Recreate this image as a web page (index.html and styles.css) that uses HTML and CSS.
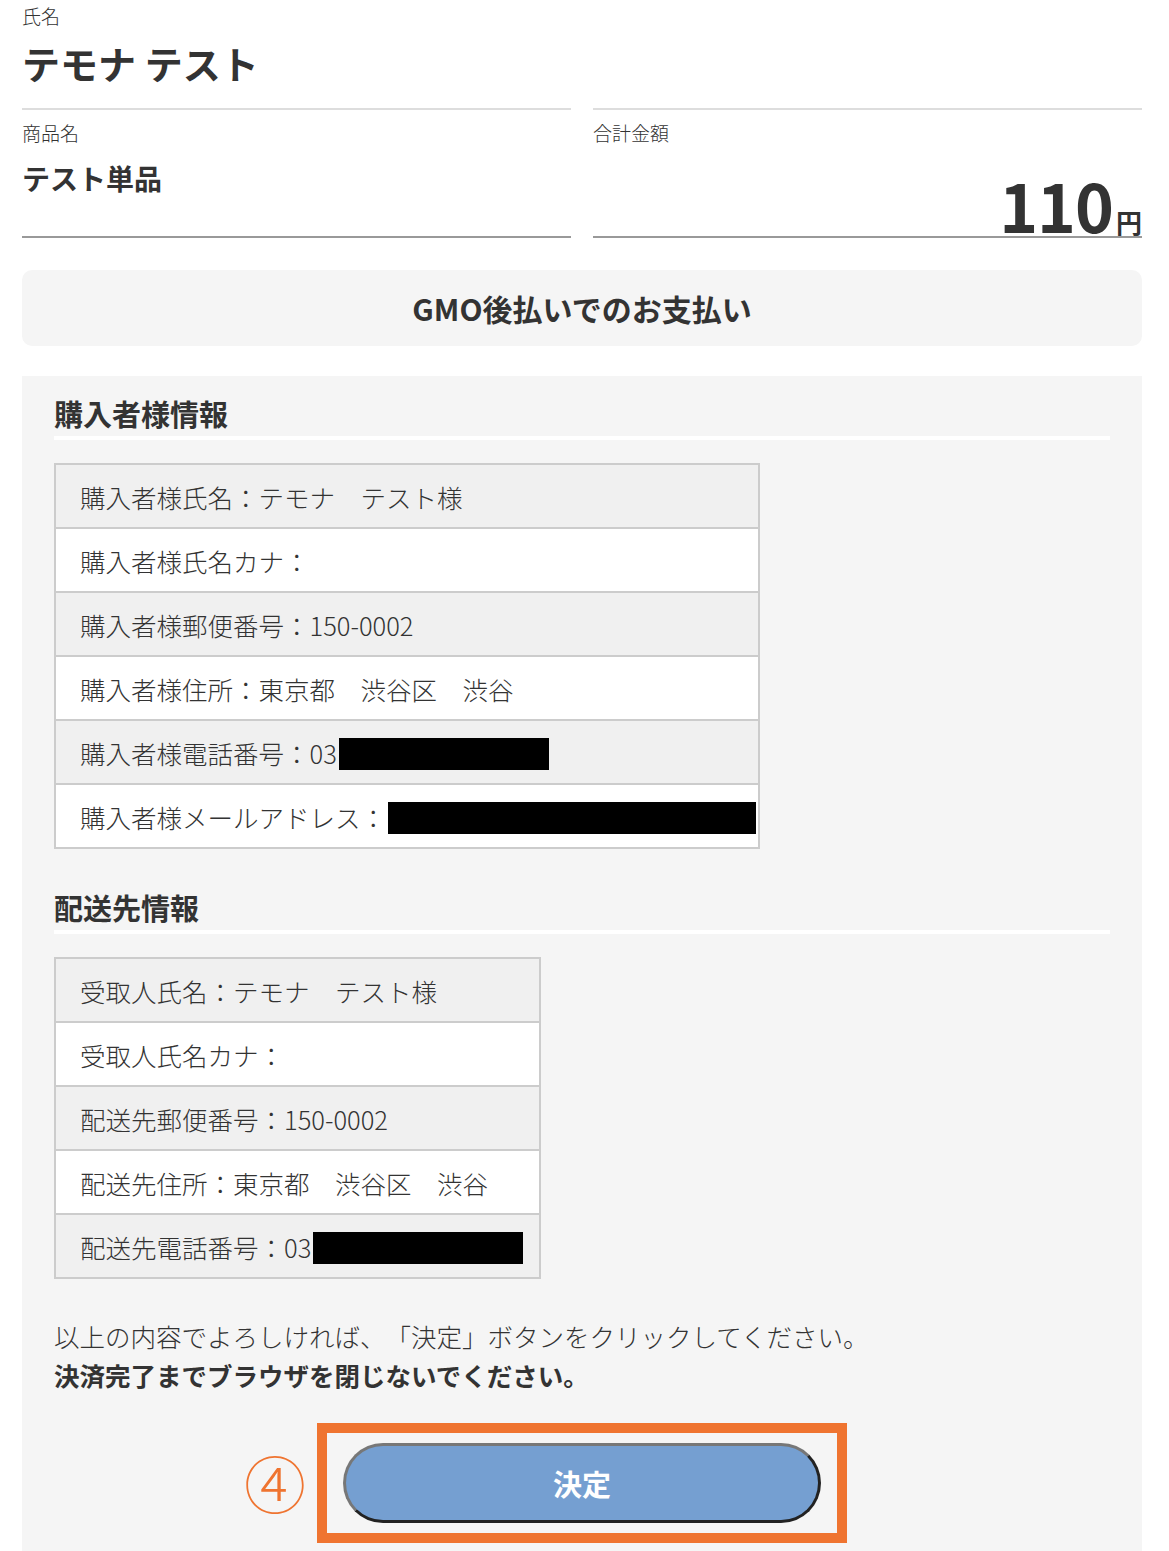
FILE: index.html
```html
<!DOCTYPE html>
<html lang="ja">
<head>
<meta charset="utf-8">
<title>GMO後払いでのお支払い</title>
<link rel="stylesheet" href="styles.css">
</head>
<body>
<div class="page">
  <div class="customer">
    <div class="label">氏名</div>
    <div class="customer-name">テモナ テスト</div>
  </div>

  <div class="summary">
    <div class="summary-col">
      <div class="label">商品名</div>
      <div class="product-name">テスト単品</div>
    </div>
    <div class="summary-col summary-total">
      <div class="label">合計金額</div>
      <div class="price">110<span class="yen">円</span></div>
    </div>
  </div>

  <div class="method">GMO後払いでのお支払い</div>

  <div class="panel">
    <h3 class="panel-heading">購入者様情報</h3>
    <div class="info-list info-buyer">
      <div class="info-row">購入者様氏名：テモナ　テスト様</div>
      <div class="info-row">購入者様氏名カナ：</div>
      <div class="info-row">購入者様郵便番号：150-0002</div>
      <div class="info-row">購入者様住所：東京都　渋谷区　渋谷</div>
      <div class="info-row">購入者様電話番号：03<span class="redact redact-phone"></span></div>
      <div class="info-row">購入者様メールアドレス：<span class="redact redact-mail"></span></div>
    </div>

    <h3 class="panel-heading panel-heading-second">配送先情報</h3>
    <div class="info-list info-ship">
      <div class="info-row">受取人氏名：テモナ　テスト様</div>
      <div class="info-row">受取人氏名カナ：</div>
      <div class="info-row">配送先郵便番号：150-0002</div>
      <div class="info-row">配送先住所：東京都　渋谷区　渋谷</div>
      <div class="info-row">配送先電話番号：03<span class="redact redact-phone"></span></div>
    </div>

    <div class="notice">
      <p class="notice-line">以上の内容でよろしければ、「決定」ボタンをクリックしてください。</p>
      <p class="notice-line notice-strong">決済完了までブラウザを閉じないでください。</p>
    </div>

    <div class="submit-area">
      <div class="highlight">
        <span class="step">④</span>
        <button class="submit-btn" type="button">決定</button>
      </div>
    </div>
  </div>
</div>
</body>
</html>
```

FILE: styles.css
```css
html, body {
  margin: 0;
  padding: 0;
  background: #ffffff;
}

body {
  font-family: "Noto Sans CJK JP", "Noto Sans", sans-serif;
  color: #333333;
  text-spacing-trim: space-all;
}

.page {
  padding: 0 27px 0 22px;
}

.label {
  font-size: 19px;
  line-height: 19px;
  font-weight: 300;
  color: #333333;
}

.customer {
  padding: 6px 0 26px;
}

.customer-name {
  margin-top: 19px;
  font-size: 38px;
  line-height: 38px;
  font-weight: 700;
}

.summary {
  display: grid;
  grid-template-columns: 1fr 1fr;
  column-gap: 22px;
}

.summary-col {
  border-top: 2px solid #dddddd;
  border-bottom: 2px solid #999999;
  padding-top: 13px;
  box-sizing: content-box;
  height: 113px;
  display: flex;
  flex-direction: column;
}

.product-name {
  margin-top: 22px;
  font-size: 28px;
  line-height: 28px;
  font-weight: 700;
}

.price {
  margin-top: auto;
  text-align: right;
  font-size: 66px;
  line-height: 66px;
  font-weight: 700;
  margin-bottom: -19px;
  letter-spacing: -1px;
}

.yen {
  font-size: 26px;
  letter-spacing: 0;
  margin-left: 3px;
}

.method {
  margin-top: 32px;
  height: 76px;
  line-height: 76px;
  background: #f5f5f5;
  border-radius: 10px;
  text-align: center;
  font-size: 30px;
  font-weight: 700;
}

.panel {
  margin-top: 30px;
  background: #f5f5f5;
  padding: 23px 32px 40px;
}

.panel-heading {
  margin: 0;
  font-size: 29px;
  line-height: 28px;
  font-weight: 700;
  padding-bottom: 9px;
  border-bottom: 4px solid #ffffff;
}

.panel-heading-second {
  margin-top: 44px;
}

.info-list {
  margin-top: 23px;
  border: 2px solid #cccccc;
}

.info-buyer {
  width: 702px;
}

.info-ship {
  width: 483px;
}

.info-row {
  height: 62px;
  display: flex;
  align-items: center;
  padding-left: 24px;
  font-size: 25.5px;
  font-weight: 300;
  white-space: nowrap;
  background: #ffffff;
}

.info-row + .info-row {
  border-top: 2px solid #cccccc;
}

.info-row:nth-child(odd) {
  background: #f0f0f0;
}

.redact {
  display: inline-block;
  height: 32px;
  background: #000000;
  margin-left: 2px;
  margin-top: 4px;
}

.redact-phone {
  width: 210px;
}

.redact-mail {
  width: 368px;
}

.notice {
  margin-top: 37px;
}

.notice-line {
  margin: 0;
  font-size: 25.5px;
  line-height: 39px;
  font-weight: 300;
}

.notice-strong {
  font-weight: 700;
}

.submit-area {
  margin-top: 29px;
  display: flex;
  justify-content: center;
}

.highlight {
  position: relative;
  border: 10px solid #ef7430;
  padding: 10px 16px;
}

.step {
  position: absolute;
  right: calc(100% + 21px);
  top: 50%;
  transform: translateY(-52%);
  font-size: 62px;
  line-height: 62px;
  font-weight: 300;
  color: #ef7430;
}

.submit-btn {
  display: block;
  width: 478px;
  height: 80px;
  box-sizing: border-box;
  border-radius: 40px;
  border: 3px solid;
  border-color: #777777 #222222 #222222 #777777;
  background: #759fd1;
  color: #ffffff;
  font-family: "Noto Sans CJK JP", "Noto Sans", sans-serif;
  font-size: 29px;
  font-weight: 700;
  padding: 0;
}
```
